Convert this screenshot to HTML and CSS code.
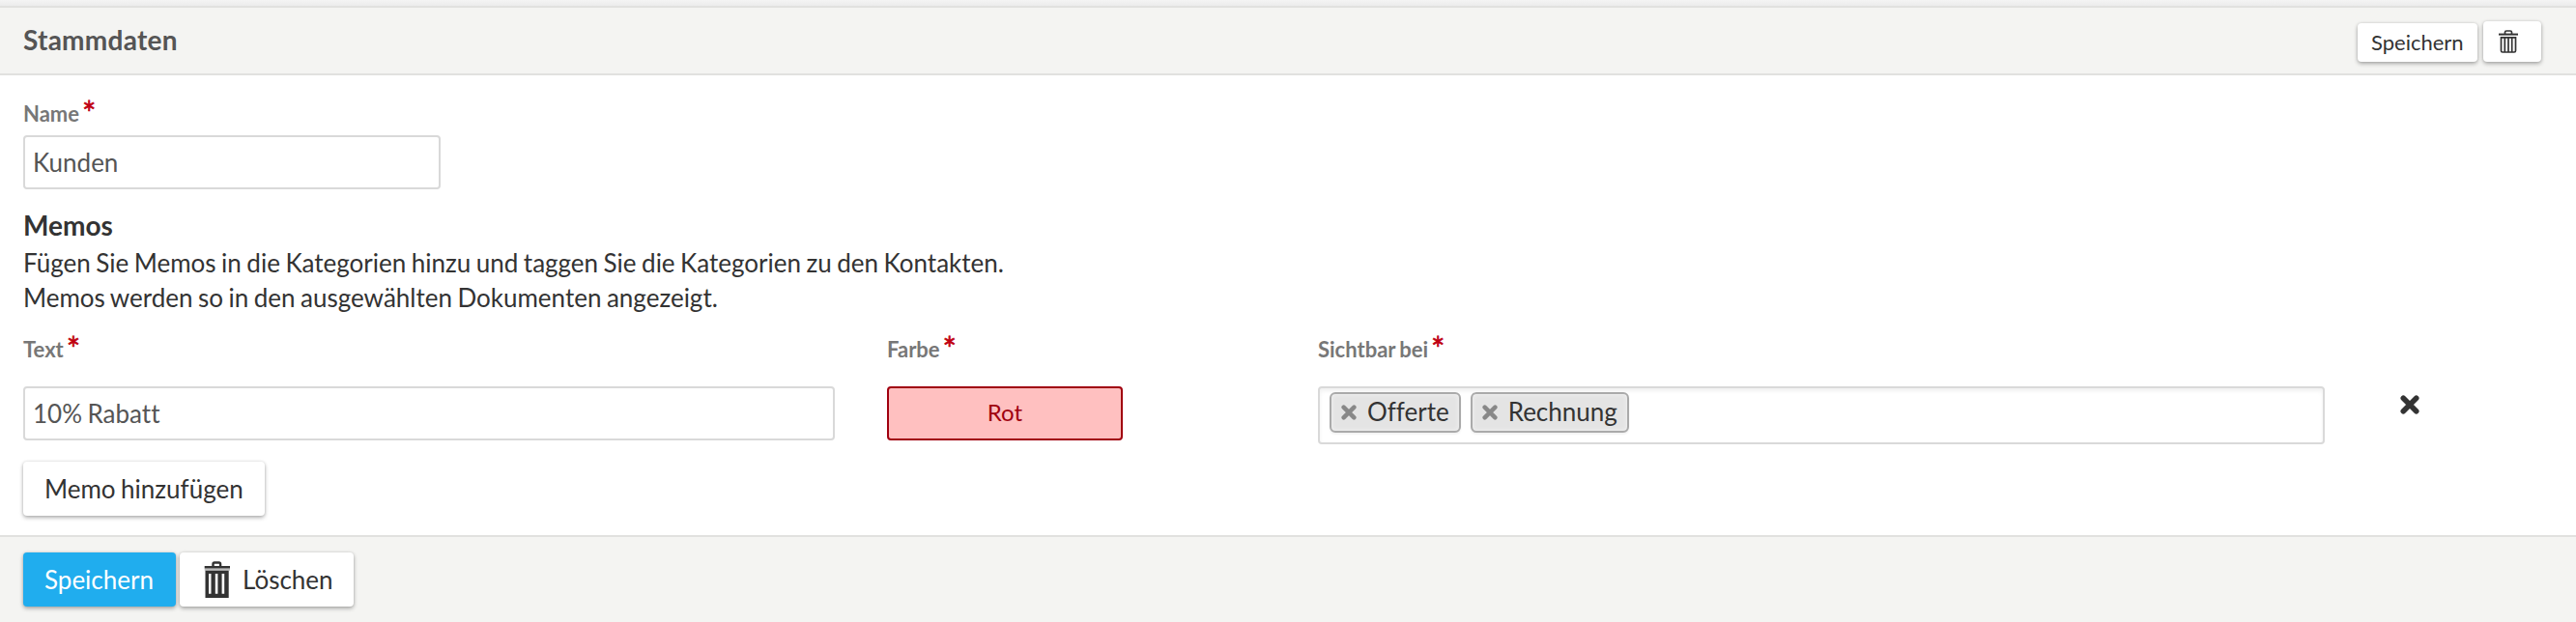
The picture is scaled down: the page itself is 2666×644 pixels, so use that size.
FILE: index.html
```html
<!DOCTYPE html>
<html lang="de">
<head>
<meta charset="utf-8">
<title>Stammdaten</title>
<link rel="stylesheet" href="styles.css">
</head>
<body>
<svg class="defs" width="0" height="0">
  <symbol id="x" viewBox="0 0 20 20"><path d="M3.300 3.300 16.700 16.700M16.700 3.300 3.300 16.700" stroke="currentColor" stroke-width="5.600" stroke-linecap="round" fill="none"/></symbol>
</svg>
<div class="strip"></div>
<header class="panel-head">
  <h1>Stammdaten</h1>
  <div class="head-actions">
    <button class="btn small">Speichern</button>
    <button class="btn small icon-only" aria-label="Löschen">
      <svg width="20" height="24" viewBox="0 0 20 24" fill="none" stroke="currentColor"><path d="M0 4.600H20" stroke-width="2"/><path d="M6.500 4V2.500Q6.500 1 8 1H12Q13.500 1 13.500 2.500V4" stroke-width="1.700"/><path d="M2.500 7.900H17.500V21.500Q17.500 23 16 23H4Q2.500 23 2.500 21.500Z" stroke-width="1.700"/><path d="M6.300 8V23M10 8V23M13.700 8V23" stroke-width="1.700"/></svg>
    </button>
  </div>
</header>
<main class="panel-body">
  <label class="label">Name<span class="req">*</span></label>
  <div class="input name">Kunden</div>
  <h2>Memos</h2>
  <p>Fügen Sie Memos in die Kategorien hinzu und taggen Sie die Kategorien zu den Kontakten.<br>Memos werden so in den ausgewählten Dokumenten angezeigt.</p>
  <div class="memo-row">
    <div class="col"><label class="label">Text<span class="req">*</span></label><div class="input">10% Rabatt</div></div>
    <div class="col"><label class="label">Farbe<span class="req">*</span></label><div class="color">Rot</div></div>
    <div class="col"><label class="label">Sichtbar bei<span class="req">*</span></label>
      <div class="select">
        <span class="tag"><svg width="16" height="16"><use href="#x"/></svg>Offerte</span>
        <span class="tag"><svg width="16" height="16"><use href="#x"/></svg>Rechnung</span>
      </div>
    </div>
    <div class="remove"><svg width="20" height="20"><use href="#x"/></svg></div>
  </div>
  <button class="btn add">Memo hinzufügen</button>
</main>
<footer class="panel-foot">
  <button class="btn primary">Speichern</button>
  <button class="btn delete"><svg width="27" height="38" viewBox="0 0 27 38"><path d="M.7 7.500H27V9.700H.7Z" fill="#bbb"/><path d="M.7 5H27V7.500H.7Z" fill="currentColor"/><path d="M9.500 5.500V3Q9.500 1.500 11 1.500H15.600Q17.100 1.500 17.100 3V5.500" fill="none" stroke="currentColor" stroke-width="2.400"/><path fill="currentColor" fill-rule="evenodd" d="M1.500 9.700H25.700V38H1.500ZM5 13V33.700H7.500V13ZM11.800 13V33.700H14.400V13ZM18.600 13V33.700H21.200V13Z"/></svg>Löschen</button>
</footer>
</body>
</html>
```

FILE: styles.css
```css
* { box-sizing: border-box; }
body { margin: 0; height: 644px; display: flex; flex-direction: column; overflow: hidden; background: #fff; color: #333; font: 26px/36px Lato, sans-serif; font-variant-ligatures: none; word-spacing: -1.15px; }
h1, h2, p { margin: 0; }
.defs { position: absolute; }
.strip { height: 6px; flex: none; background: linear-gradient(#f4f4f4, #ececec); }
.panel-head { height: 72px; flex: none; display: flex; align-items: center; justify-content: space-between; padding: 0 36px 0 24px; background: #f4f4f2; border-top: 2px solid #e1e1df; border-bottom: 2px solid #e1e1df; }
h1 { padding-bottom: 2px; font-size: 28px; line-height: 36px; letter-spacing: .25px; color: #555; }
.head-actions { display: flex; align-items: flex-end; gap: 6px; padding-top: 2px; }
.btn { display: inline-flex; align-items: center; height: 56px; padding: 0 22px; border: 0; border-radius: 4px; background: #fff; color: #333; font: inherit; word-spacing: inherit; white-space: nowrap; box-shadow: 0 2px 4px rgba(0,0,0,.3), 0 0 3px rgba(0,0,0,.12); }
.small { width: 124px; height: 40px; padding: 0 14px; font-size: 22px; }
.icon-only { width: 60px; height: 42px; padding: 0 16px; }
.panel-body { height: 476px; flex: none; padding: 22px 24px 0; }
.label { display: block; height: 36px; font-size: 22px; font-weight: 700; color: #777; }
.req { margin-left: 3px; color: #c00010; font-size: 34px; font-weight: 400; line-height: 0; vertical-align: -4px; -webkit-text-stroke: .6px #c00010; }
.input { height: 56px; padding: 8px; border: 2px solid #d9d9d9; border-radius: 4px; color: #555; }
.name { width: 432px; margin-top: 4px; }
h2 { margin: 19px 0 3px; font-size: 28px; line-height: 36px; }
.memo-row { display: grid; grid-template-columns: 894px 446px 1120px 20px; height: 134px; margin-top: 18px; }
.memo-row .label { margin-bottom: 20px; }
.col:nth-child(1) { width: 840px; }
.col:nth-child(2) { width: 244px; }
.col:nth-child(3) { width: 1042px; }
.color { height: 56px; padding: 7px 0; border: 2px solid #a0000f; border-radius: 4px; background: #ffc0c0; color: #a0000f; font-size: 24px; text-align: center; }
.select { display: flex; gap: 10px; height: 60px; padding: 4px 10px; border: 2px solid #d9d9d9; border-radius: 4px; box-shadow: inset 0 3px 4px rgba(0,0,0,.06); }
.tag { display: flex; align-items: center; gap: 11px; height: 42px; padding: 0 10px 2px; border: 2px solid #aaa; border-radius: 6px; background: #e4e4e4; box-shadow: inset 0 0 4px #f4f4f4, 0 2px 2px rgba(0,0,0,.05); }
.tag svg { margin-top: 2px; color: #888; }
.remove { padding-top: 65px; }
.remove svg { display: block; }
.add { width: 250px; }
.panel-foot { flex: 1; display: flex; gap: 4px; padding: 16px 24px; background: #f4f4f2; border-top: 2px solid #e1e1df; }
.primary { width: 158px; background: #20adee; color: #fff; }
.delete { width: 180px; gap: 13px; padding: 0 0 0 25px; }
```
